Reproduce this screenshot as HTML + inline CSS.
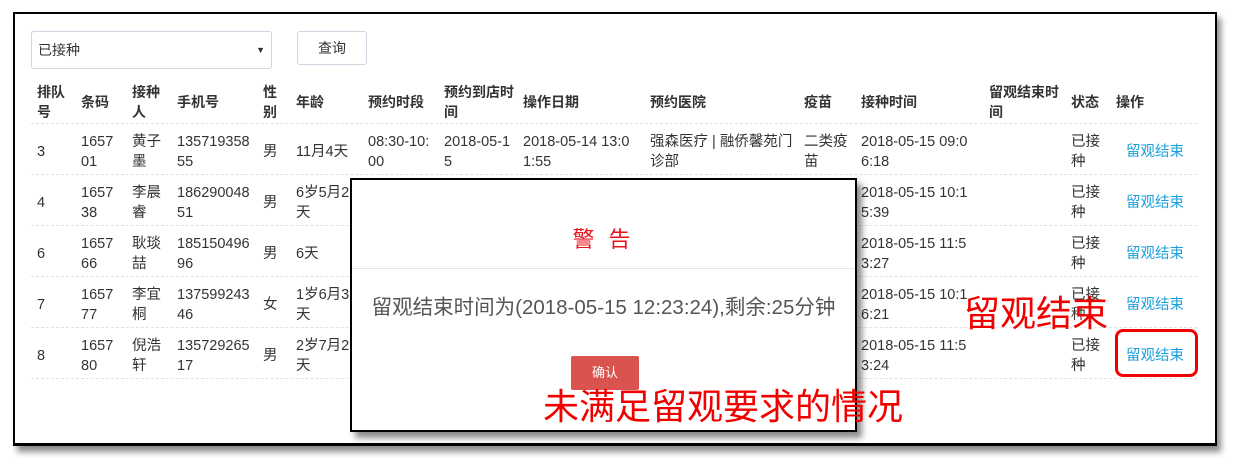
<!DOCTYPE html>
<html><head><meta charset="utf-8"><style>
*{margin:0;padding:0;box-sizing:border-box}
body{width:1236px;height:471px;background:#fff;position:relative;overflow:hidden;font-family:"Liberation Sans","Noto Sans CJK SC",sans-serif;color:#333;font-size:14px}
.frame{position:absolute;left:13px;top:12px;width:1204px;height:434px;border:2px solid #000;border-bottom-width:3px;box-shadow:4px 6px 6px rgba(0,0,0,.45)}
.sel{position:absolute;left:31px;top:31px;width:241px;height:38px;border:1px solid #ccd6e0;border-radius:3px;padding:0 6px;line-height:36px;font-size:14px}
.sel:after{content:"▼";position:absolute;right:6px;top:0;font-size:9px}
.btn{position:absolute;left:297px;top:31px;width:70px;height:34px;border:1px solid #ccd6e0;border-radius:3px;text-align:center;line-height:32px;font-size:14px}
.row{position:absolute;left:31px;width:1166px;border-bottom:1px dashed #dde3ea}
.c{position:absolute;top:0;height:100%;padding-top:5px;display:flex;align-items:center;line-height:20px;font-size:14.5px;white-space:nowrap}
.h .c{font-weight:bold;font-size:14px;padding-top:2px}
.lnk{color:#1aa1dc}
.modal{position:absolute;left:350px;top:178px;width:507px;height:254px;background:#fff;border:2px solid #000;box-shadow:5px 6px 6px rgba(0,0,0,.45)}
.mt{position:absolute;left:0;width:100%;top:42px;text-align:center;color:#e8121b;font-size:22px;letter-spacing:4px}
.ml{position:absolute;left:0;width:100%;top:88px;border-top:1px solid #e5e5e5}
.mb{position:absolute;left:0;width:100%;top:110px;text-align:center;color:#555;font-size:20.5px;white-space:nowrap}
.ok{position:absolute;left:219px;top:176px;width:68px;height:34px;background:#d9534f;color:#fff;border-radius:2px;text-align:center;line-height:34px;font-size:13px}
.ann{position:absolute;color:#f10000;font-size:36px;line-height:38px;white-space:nowrap}
.box{position:absolute;left:1115px;top:329px;width:83px;height:48px;border:3px solid #f10000;border-radius:8px}
</style></head><body>
<div class="frame"></div>
<div class="sel">已接种</div>
<div class="btn">查询</div>

<div class="row h" style="top:78px;height:46px">
<div class="c" style="left:6px">排队<br>号</div><div class="c" style="left:50px">条码</div><div class="c" style="left:101px">接种<br>人</div><div class="c" style="left:146px">手机号</div><div class="c" style="left:232px">性<br>别</div><div class="c" style="left:265px">年龄</div><div class="c" style="left:337px">预约时段</div><div class="c" style="left:413px">预约到店时<br>间</div><div class="c" style="left:492px">操作日期</div><div class="c" style="left:619px">预约医院</div><div class="c" style="left:773px">疫苗</div><div class="c" style="left:830px">接种时间</div><div class="c" style="left:958px">留观结束时<br>间</div><div class="c" style="left:1040px">状态</div><div class="c" style="left:1085px">操作</div>
</div>

<div class="row" style="top:124px;height:51px">
<div class="c" style="left:6px">3</div><div class="c" style="left:50px">1657<br>01</div><div class="c" style="left:101px">黄子<br>墨</div><div class="c" style="left:146px">135719358<br>55</div><div class="c" style="left:232px">男</div><div class="c" style="left:265px">11月4天</div><div class="c" style="left:337px">08:30-10:<br>00</div><div class="c" style="left:413px">2018-05-1<br>5</div><div class="c" style="left:492px">2018-05-14 13:0<br>1:55</div><div class="c" style="left:619px">强森医疗 | 融侨馨苑门<br>诊部</div><div class="c" style="left:773px">二类疫<br>苗</div><div class="c" style="left:830px">2018-05-15 09:0<br>6:18</div><div class="c" style="left:1040px">已接<br>种</div><div class="c lnk" style="left:1095px">留观结束</div>
</div>

<div class="row" style="top:175px;height:51px">
<div class="c" style="left:6px">4</div><div class="c" style="left:50px">1657<br>38</div><div class="c" style="left:101px">李晨<br>睿</div><div class="c" style="left:146px">186290048<br>51</div><div class="c" style="left:232px">男</div><div class="c" style="left:265px">6岁5月2<br>天</div><div class="c" style="left:830px">2018-05-15 10:1<br>5:39</div><div class="c" style="left:1040px">已接<br>种</div><div class="c lnk" style="left:1095px">留观结束</div>
</div>

<div class="row" style="top:226px;height:51px">
<div class="c" style="left:6px">6</div><div class="c" style="left:50px">1657<br>66</div><div class="c" style="left:101px">耿琰<br>喆</div><div class="c" style="left:146px">185150496<br>96</div><div class="c" style="left:232px">男</div><div class="c" style="left:265px">6天</div><div class="c" style="left:830px">2018-05-15 11:5<br>3:27</div><div class="c" style="left:1040px">已接<br>种</div><div class="c lnk" style="left:1095px">留观结束</div>
</div>

<div class="row" style="top:277px;height:51px">
<div class="c" style="left:6px">7</div><div class="c" style="left:50px">1657<br>77</div><div class="c" style="left:101px">李宜<br>桐</div><div class="c" style="left:146px">137599243<br>46</div><div class="c" style="left:232px">女</div><div class="c" style="left:265px">1岁6月3<br>天</div><div class="c" style="left:830px">2018-05-15 10:1<br>6:21</div><div class="c" style="left:1040px">已接<br>种</div><div class="c lnk" style="left:1095px">留观结束</div>
</div>

<div class="row" style="top:328px;height:51px">
<div class="c" style="left:6px">8</div><div class="c" style="left:50px">1657<br>80</div><div class="c" style="left:101px">倪浩<br>轩</div><div class="c" style="left:146px">135729265<br>17</div><div class="c" style="left:232px">男</div><div class="c" style="left:265px">2岁7月2<br>天</div><div class="c" style="left:830px">2018-05-15 11:5<br>3:24</div><div class="c" style="left:1040px">已接<br>种</div><div class="c lnk" style="left:1095px">留观结束</div>
</div>

<div class="modal">
<div class="mt">警 告</div>
<div class="ml"></div>
<div class="mb">留观结束时间为(2018-05-15 12:23:24),剩余:25分钟</div>
<div class="ok">确认</div>
</div>

<div class="ann" style="left:964px;top:295px">留观结束</div>
<div class="box"></div>
<div class="ann" style="left:543px;top:388px">未满足留观要求的情况</div>
</body></html>
